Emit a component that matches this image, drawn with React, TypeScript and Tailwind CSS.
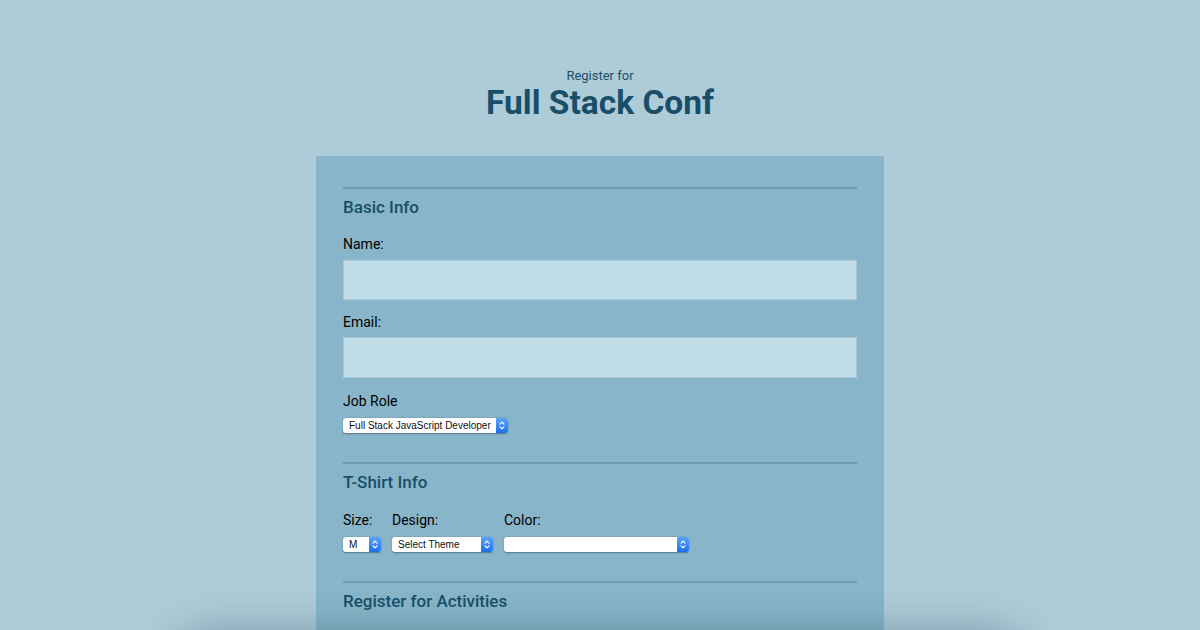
import React from "react"

function Chevrons() {
  return (
    <svg width="6" height="9" viewBox="0 0 6 9" fill="none" stroke="white" strokeWidth="1.2" strokeLinecap="round" strokeLinejoin="round">
      <path d="M1 3.2L3 1.2L5 3.2" />
      <path d="M1 5.8L3 7.8L5 5.8" />
    </svg>
  )
}

function FakeSelect({ value, width }: { value: string; width: string }) {
  return (
    <div
      className={`${width} h-[15px] flex items-stretch bg-white rounded-[3px] shadow-[0_0.5px_1.5px_rgba(0,0,0,0.35)] overflow-hidden`}
    >
      <div className="flex-1 flex items-center pl-[6px] text-[10px] leading-none text-[#111] font-['Liberation_Sans',sans-serif] whitespace-nowrap overflow-hidden">
        {value}
      </div>
      <div className="w-[12px] flex items-center justify-center bg-gradient-to-b from-[#5aa3f8] to-[#1a6ff0]">
        <Chevrons />
      </div>
    </div>
  )
}

function Section({ title, first }: { title: string; first?: boolean }) {
  return (
    <>
      <div className={`h-[2px] bg-[#6c9db3] ${first ? "" : "mt-[29px]"}`} />
      <h2 className="mt-[7px] text-[17px] leading-[22px] font-medium text-[#184f68]">{title}</h2>
    </>
  )
}

export default function App() {
  return (
    <div className="relative h-[630px] overflow-hidden bg-[#aecbd8] font-['Roboto',sans-serif]">
      <header className="pt-[67px] text-center text-[#184f68]">
        <p className="text-[13px] leading-[17px]">Register for</p>
        <h1 className="text-[33.5px] leading-[38px] font-bold">Full Stack Conf</h1>
      </header>

      <form className="mx-auto mt-[34px] w-[568px] bg-[#88b5c9] px-[27px] pt-[31px] pb-10">
        <Section title="Basic Info" first />

        <label className="block mt-[17px] text-[14px] leading-[18px] text-black">Name:</label>
        <div className="mt-[7px] h-[40px] bg-[#c1dde8] border border-[#a8cadb]" />

        <label className="block mt-[13px] text-[14px] leading-[18px] text-black">Email:</label>
        <div className="mt-[6px] h-[41px] bg-[#c1dde8] border border-[#a8cadb]" />

        <label className="block mt-[14px] text-[14px] leading-[18px] text-black">Job Role</label>
        <div className="mt-[8px]">
          <FakeSelect value="Full Stack JavaScript Developer" width="w-[165px]" />
        </div>

        <Section title="T-Shirt Info" />

        <div className="mt-[18px] flex gap-[11px]">
          <div className="w-[38px]">
            <label className="block text-[14px] leading-[18px] text-black">Size:</label>
            <div className="mt-[8px]">
              <FakeSelect value="M" width="w-[38px]" />
            </div>
          </div>
          <div className="w-[101px]">
            <label className="block text-[14px] leading-[18px] text-black">Design:</label>
            <div className="mt-[8px]">
              <FakeSelect value="Select Theme" width="w-[101px]" />
            </div>
          </div>
          <div className="w-[185px]">
            <label className="block text-[14px] leading-[18px] text-black">Color:</label>
            <div className="mt-[8px]">
              <FakeSelect value="" width="w-[185px]" />
            </div>
          </div>
        </div>

        <Section title="Register for Activities" />
      </form>

      <div className="absolute left-[190px] right-[190px] top-[650px] h-[40px] rounded-[40px] shadow-[0_0_40px_18px_rgba(40,70,90,0.4)]" />
    </div>
  )
}
